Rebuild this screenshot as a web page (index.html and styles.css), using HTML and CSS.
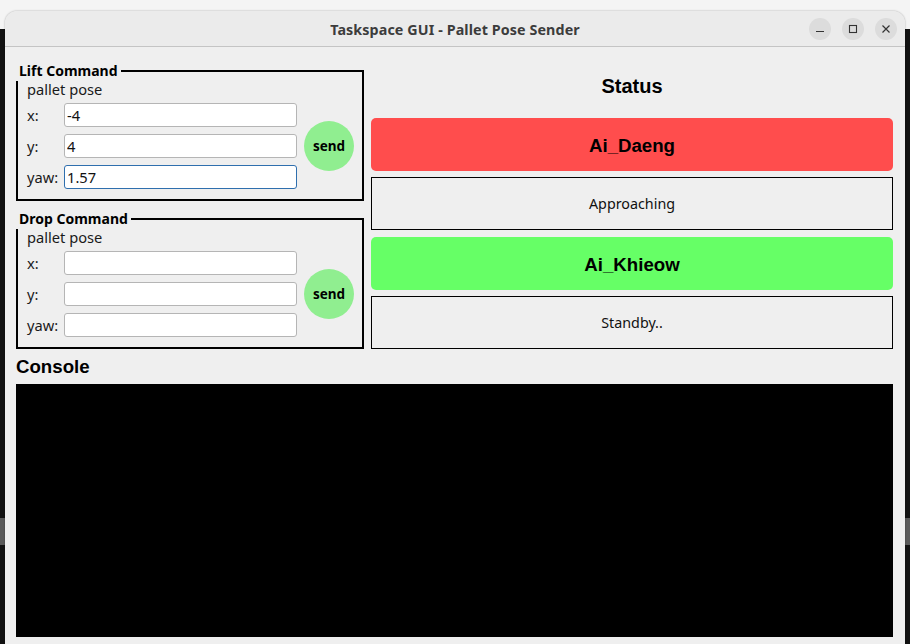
FILE: index.html
```html
<!DOCTYPE html>
<html>
<head>
<meta charset="utf-8">
<title>Taskspace GUI - Pallet Pose Sender</title>
<link rel="stylesheet" href="styles.css">
</head>
<body>
<div class="desktop">
  <div class="window">
    <div class="titlebar">
      <div class="title">Taskspace GUI - Pallet Pose Sender</div>
      <div class="wbtns">
        <span class="wbtn"><svg width="10" height="10" viewBox="0 0 10 10"><path d="M1 7.5H9" stroke="#333" stroke-width="1.2"/></svg></span>
        <span class="wbtn"><svg width="10" height="10" viewBox="0 0 10 10"><rect x="1.5" y="1.5" width="7" height="7" fill="none" stroke="#333" stroke-width="1.1"/></svg></span>
        <span class="wbtn"><svg width="10" height="10" viewBox="0 0 10 10"><path d="M1.5 1.5L8.5 8.5M8.5 1.5L1.5 8.5" stroke="#333" stroke-width="1.2"/></svg></span>
      </div>
    </div>
    <div class="content">
      <div class="top">
        <div class="left">
          <div class="group">
            <div class="group-title">Lift Command</div>
            <div class="group-body">
              <div class="sub">pallet pose</div>
              <div class="form">
                <div class="fields">
                  <div class="row"><span class="lbl">x:</span><input class="inp" type="text" value="-4"></div>
                  <div class="row"><span class="lbl">y:</span><input class="inp" type="text" value="4"></div>
                  <div class="row"><span class="lbl">yaw:</span><input class="inp focus" type="text" value="1.57"></div>
                </div>
                <button class="send">send</button>
              </div>
            </div>
          </div>
          <div class="group second">
            <div class="group-title">Drop Command</div>
            <div class="group-body">
              <div class="sub">pallet pose</div>
              <div class="form">
                <div class="fields">
                  <div class="row"><span class="lbl">x:</span><input class="inp" type="text" value=""></div>
                  <div class="row"><span class="lbl">y:</span><input class="inp" type="text" value=""></div>
                  <div class="row"><span class="lbl">yaw:</span><input class="inp" type="text" value=""></div>
                </div>
                <button class="send">send</button>
              </div>
            </div>
          </div>
        </div>
        <div class="right">
          <div class="status-h">Status</div>
          <div class="robot red">Ai_Daeng</div>
          <div class="state">Approaching</div>
          <div class="robot green">Ai_Khieow</div>
          <div class="state">Standby..</div>
        </div>
      </div>
      <div class="console-h">Console</div>
      <div class="console"></div>
    </div>
  </div>
</div>
</body>
</html>
```
FILE: styles.css
```css
html, body {
  margin: 0;
  padding: 0;
}
body {
  width: 910px;
  height: 644px;
  overflow: hidden;
  background:
    linear-gradient(to bottom, transparent 0, transparent 518px, #5a5a5a 518px, #5a5a5a 545px, transparent 545px),
    linear-gradient(to bottom, #f4f4f4 0, #f4f4f4 29px, #121212 29px);
  font-family: "Noto Sans", "DejaVu Sans", sans-serif;
}
.desktop {
  padding: 11px 5px 0 5px;
}
.window {
  background: #efefef;
  border-radius: 12px 12px 0 0;
  height: 640px;
  overflow: hidden;
  box-shadow: 0 0 2px rgba(0,0,0,0.35);
}
.titlebar {
  box-sizing: border-box;
  height: 36px;
  padding-top: 2px;
  background: #ebebeb;
  border-bottom: 1px solid #c4c4c4;
  display: flex;
  align-items: center;
  justify-content: center;
  position: relative;
}
.title {
  font-weight: bold;
  font-size: 14.3px;
  letter-spacing: 0.1px;
  color: #3c3c3c;
}
.wbtns {
  position: absolute;
  right: 8px;
  top: 7px;
  display: flex;
  gap: 11px;
}
.wbtn {
  width: 22px;
  height: 22px;
  border-radius: 50%;
  background: #dcdcdc;
  display: flex;
  align-items: center;
  justify-content: center;
}
.content {
  padding: 0 12px 0 11px;
}
.top {
  display: flex;
  gap: 7px;
}
.left {
  width: 348px;
  padding-top: 23px;
}
.group {
  position: relative;
  border: 2px solid #000;
}
.group.second {
  margin-top: 17px;
}
.group-title {
  position: absolute;
  left: -2px;
  top: -9px;
  padding: 0 3px 2px 3px;
  background: #efefef;
  font-weight: bold;
  font-size: 14px;
  line-height: 16px;
  color: #000;
}
.group-body {
  padding: 8px 8px 10px 9px;
}
.sub {
  font-size: 14.67px;
  line-height: 18px;
  height: 18px;
  color: #1a1a1a;
  margin-bottom: 5px;
}
.form {
  display: flex;
  align-items: center;
  gap: 7px;
}
.fields {
  display: flex;
  flex-direction: column;
  gap: 7px;
}
.row {
  display: flex;
  align-items: center;
  height: 24px;
}
.lbl {
  width: 37px;
  font-size: 14.67px;
  color: #1a1a1a;
}
.inp {
  box-sizing: border-box;
  width: 233px;
  height: 24px;
  margin: 0;
  border: 1px solid #b5b5b5;
  border-radius: 3px;
  background: #fff;
  padding: 0 2px;
  font-family: "Noto Sans", "DejaVu Sans", sans-serif;
  font-size: 14.67px;
  color: #111;
  outline: none;
}
.inp.focus {
  border-color: #2f6fae;
}
.send {
  width: 50px;
  height: 50px;
  border-radius: 50%;
  border: none;
  background: #90ee90;
  padding: 0;
  font-family: "Noto Sans", "DejaVu Sans", sans-serif;
  font-weight: bold;
  font-size: 13.5px;
  color: #000;
}
.right {
  flex: 1;
  display: flex;
  flex-direction: column;
  gap: 6px;
  padding-top: 26px;
}
.status-h {
  font-family: "Liberation Sans", Arial, sans-serif;
  font-weight: bold;
  font-size: 20px;
  line-height: 26px;
  text-align: center;
  color: #000;
  margin-bottom: 13px;
}
.robot {
  box-sizing: border-box;
  height: 53px;
  padding-top: 2px;
  border-radius: 5px;
  display: flex;
  align-items: center;
  justify-content: center;
  font-family: "Liberation Sans", Arial, sans-serif;
  font-weight: bold;
  font-size: 18.67px;
  color: #000;
}
.red { background: #ff4d4d; }
.green { background: #66ff66; margin-top: 1px; }
.state {
  box-sizing: border-box;
  height: 53px;
  border: 1px solid #000;
  display: flex;
  align-items: center;
  justify-content: center;
  font-size: 14.3px;
  color: #111;
}
.console-h {
  margin-top: 7px;
  font-family: "Liberation Sans", Arial, sans-serif;
  font-weight: bold;
  font-size: 18.67px;
  line-height: 22px;
  color: #000;
}
.console {
  margin-top: 6px;
  height: 253px;
  background: #000;
}
```
